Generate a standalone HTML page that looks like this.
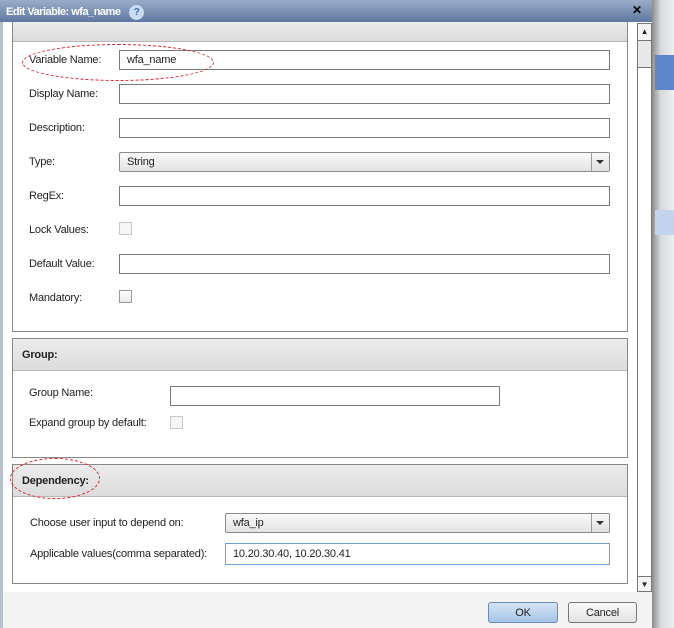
<!DOCTYPE html>
<html><head><style>
*{margin:0;padding:0;box-sizing:border-box}
body{width:674px;height:628px;overflow:hidden;position:relative;background:#e4e6ea;font-family:"Liberation Sans",sans-serif;font-size:11px;color:#222;letter-spacing:-0.2px}
.a{position:absolute}
.title{left:0;top:0;width:652px;height:22px;background:linear-gradient(#9aacc8,#5f78a2);color:#fff;font-weight:bold;font-size:11px;padding:5px 0 0 6px;letter-spacing:-0.5px}
.dlg{left:0;top:22px;width:652px;height:606px;background:#fff;border-left:3px solid #b8c0cc}
.lbl{position:absolute;font-size:11px;color:#222}
.inp{position:absolute;height:20px;border:1px solid #7a7a7a;background:#fff;padding:3px 7px;font-size:11px}
.sel{position:absolute;height:20px;border:1px solid #8a8a8a;border-radius:2px;background:linear-gradient(#fafafa,#e3e3e3);padding:3px 7px;font-size:11px}
.sel:after{content:"";position:absolute;right:0;top:0;width:17px;height:18px;border-left:1px solid #999;background:linear-gradient(#f8f8f8,#e0e0e0)}
.sel i{position:absolute;right:5px;top:7px;width:0;height:0;border-left:4px solid transparent;border-right:4px solid transparent;border-top:4px solid #333;z-index:2}
.cb{position:absolute;width:13px;height:13px;border:1px solid #999;background:linear-gradient(#fff,#e8e8e8)}
.cb.d{border-color:#c8c8c8;background:#f6f6f6}
.panel{position:absolute;left:12px;width:616px;border:1px solid #888;background:#fff}
.hd{position:absolute;left:0;right:0;top:0;height:32px;background:linear-gradient(#ececec,#dcdcdc);border-bottom:1px solid #b8b8b8;font-weight:bold;padding:10px 0 0 9px}
.ell{position:absolute;border:1px dashed #e02020;border-radius:50%}
.btn{position:absolute;height:21px;border:1px solid #777;border-radius:3px;text-align:center;padding-top:4px;font-size:11px}
</style></head><body>
<div class="a" style="left:652px;top:0;width:22px;height:628px;background:linear-gradient(90deg,#8a8c90,#d8dadd 40%,#eceef0)"></div>
<div class="a" style="left:655px;top:55px;width:19px;height:35px;background:#5c86c8"></div>
<div class="a" style="left:655px;top:210px;width:19px;height:25px;background:#c4d4ee"></div>
<div class="a dlg"></div>
<div class="a title">Edit Variable: wfa_name <span style="display:inline-block;width:15px;height:15px;border-radius:50%;background:#c9dcf2;color:#3d6db0;text-align:center;font-size:10px;line-height:15px;margin-left:6px">?</span></div>
<div class="a" style="left:632px;top:3px;color:#000;font-weight:bold;font-size:12px">✕</div>
<div class="a" style="left:637px;top:23px;width:15px;height:569px;border:1px solid #777;background:#fff"></div>
<div class="a" style="left:637px;top:23px;width:15px;height:18px;border:1px solid #777;background:#f4f4f4;font-size:8px;text-align:center;padding-top:3px">▲</div>
<div class="a" style="left:638px;top:41px;width:13px;height:27px;background:#e8e8e8;border-bottom:1px solid #777"></div>
<div class="a" style="left:637px;top:576px;width:15px;height:16px;border:1px solid #777;background:#f4f4f4;font-size:8px;text-align:center;padding-top:3px">▼</div>
<div class="panel" style="top:22px;height:310px;border-top:none"><div class="hd" style="height:20px;padding:0"></div></div>
<div class="lbl" style="left:29px;top:54px">Variable Name:</div>
<div class="inp" style="left:119px;top:50px;width:491px">wfa_name</div>
<div class="lbl" style="left:29px;top:88px">Display Name:</div>
<div class="inp" style="left:119px;top:84px;width:491px"></div>
<div class="lbl" style="left:29px;top:122px">Description:</div>
<div class="inp" style="left:119px;top:118px;width:491px"></div>
<div class="lbl" style="left:29px;top:156px">Type:</div>
<div class="sel" style="left:119px;top:152px;width:491px">String<i></i></div>
<div class="lbl" style="left:29px;top:190px">RegEx:</div>
<div class="inp" style="left:119px;top:186px;width:491px"></div>
<div class="lbl" style="left:29px;top:224px">Lock Values:</div>
<div class="cb d" style="left:119px;top:222px"></div>
<div class="lbl" style="left:29px;top:258px">Default Value:</div>
<div class="inp" style="left:119px;top:254px;width:491px"></div>
<div class="lbl" style="left:29px;top:292px">Mandatory:</div>
<div class="cb" style="left:119px;top:290px"></div>
<div class="panel" style="top:338px;height:120px"><div class="hd">Group:</div></div>
<div class="lbl" style="left:29px;top:387px">Group Name:</div>
<div class="inp" style="left:170px;top:386px;width:330px"></div>
<div class="lbl" style="left:29px;top:417px">Expand group by default:</div>
<div class="cb d" style="left:170px;top:416px"></div>
<div class="panel" style="top:464px;height:120px"><div class="hd">Dependency:</div></div>
<div class="lbl" style="left:30px;top:517px">Choose user input to depend on:</div>
<div class="sel" style="left:225px;top:513px;width:385px">wfa_ip<i></i></div>
<div class="lbl" style="left:30px;top:548px">Applicable values(comma separated):</div>
<div class="inp" style="left:225px;top:543px;width:385px;height:22px;border-color:#6a9fd8;padding-top:4px">10.20.30.40, 10.20.30.41</div>
<div class="a" style="left:3px;top:592px;width:649px;height:36px;background:#f3f3f3"></div>
<div class="btn" style="left:488px;top:602px;width:70px;background:linear-gradient(#d4e4f6,#a6c4e6);border-color:#6a8ab0">OK</div>
<div class="btn" style="left:568px;top:602px;width:69px;background:linear-gradient(#fafafa,#e2e2e2)">Cancel</div>
<div class="ell" style="left:22px;top:44px;width:192px;height:37px"></div>
<div class="ell" style="left:10px;top:458px;width:90px;height:41px"></div>
</body></html>
